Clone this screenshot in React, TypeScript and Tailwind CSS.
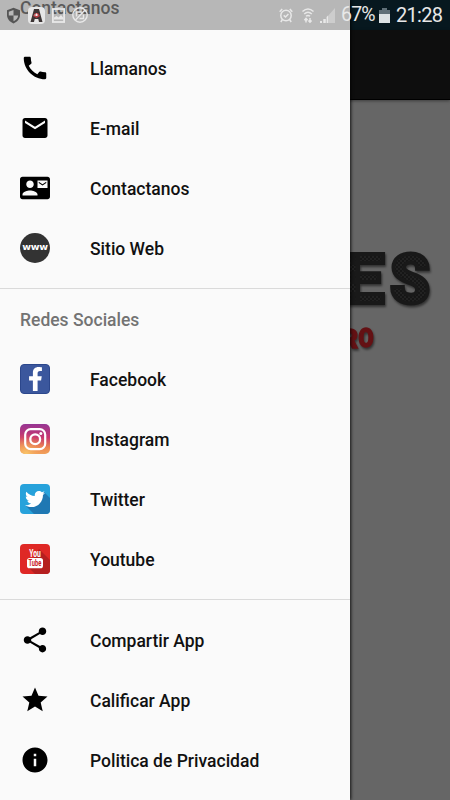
import type { ReactNode } from "react";
import { FaFacebookF, FaTwitter } from "react-icons/fa";
import { MdCall, MdContactMail, MdEmail, MdInfo, MdShare, MdStar } from "react-icons/md";

interface DrawerItem {
  label: string;
  icon: ReactNode;
}

function WebIcon() {
  return (
    <div className="flex h-[30px] w-[30px] items-center justify-center rounded-full bg-[#333]">
      <span className="-mt-[2px] font-['DejaVu_Sans',sans-serif] text-[9.5px] font-bold leading-none tracking-[-0.3px] text-white">
        www
      </span>
    </div>
  );
}

function FacebookIcon() {
  return (
    <div className="flex h-[30px] w-[30px] items-end justify-center overflow-hidden rounded-[4px] border border-[#2c478c] bg-[#3b579d]">
      <FaFacebookF className="mb-[2px] h-[24px] w-[15px] text-white" preserveAspectRatio="none" />
    </div>
  );
}

function InstagramIcon() {
  return (
    <svg width="30" height="30" viewBox="0 0 30 30" fill="none">
      <defs>
        <linearGradient id="ig-base" x1="0" y1="0" x2="0" y2="1">
          <stop offset="0" stopColor="#963694" />
          <stop offset="0.45" stopColor="#c8376f" />
          <stop offset="0.8" stopColor="#ed8a50" />
          <stop offset="1" stopColor="#f0a45c" />
        </linearGradient>
        <radialGradient id="ig-glow" cx="0.2" cy="1" r="0.7">
          <stop offset="0" stopColor="#f9c768" />
          <stop offset="1" stopColor="#f08050" stopOpacity="0" />
        </radialGradient>
      </defs>
      <rect width="30" height="30" rx="5" fill="url(#ig-base)" />
      <rect width="30" height="30" rx="5" fill="url(#ig-glow)" />
      <rect x="5.2" y="5.2" width="20" height="20" rx="5.5" stroke="white" strokeWidth="2.2" />
      <circle cx="15.2" cy="15.2" r="4.9" stroke="white" strokeWidth="2.3" />
      <circle cx="20.8" cy="9.4" r="1.5" fill="white" />
    </svg>
  );
}

function TwitterIcon() {
  return (
    <div className="relative h-[30px] w-[30px] overflow-hidden rounded-[4px] bg-[#27a2db]">
      <svg className="absolute inset-0" width="30" height="30" viewBox="0 0 30 30">
        <path d="M24 8 L30 14 V30 H14 L6 22 L15 20Z" fill="#1f78b3" />
      </svg>
      <FaTwitter className="absolute left-[5px] top-[5px] h-[20px] w-[20px] text-white" />
    </div>
  );
}

function YoutubeIcon() {
  return (
    <div className="relative h-[30px] w-[30px] overflow-hidden rounded-[4px] bg-[#df2825]">
      <svg className="absolute inset-0" width="30" height="30" viewBox="0 0 30 30">
        <path d="M19 5 L30 16 V30 H15 L8 23Z" fill="#b51f20" />
        <rect x="7" y="14" width="16" height="10.3" rx="2.6" fill="white" />
        <g fontFamily="Roboto, sans-serif" fontWeight="700" textAnchor="middle">
          <text x="15" y="12.8" fontSize="10.5" fill="white" textLength="11.5" lengthAdjust="spacingAndGlyphs">
            You
          </text>
          <text x="15" y="22.4" fontSize="8.8" fill="#c9201f" textLength="13" lengthAdjust="spacingAndGlyphs">
            Tube
          </text>
        </g>
      </svg>
    </div>
  );
}

const contactItems: DrawerItem[] = [
  { label: "Llamanos", icon: <MdCall size={30} /> },
  { label: "E-mail", icon: <MdEmail size={30} /> },
  { label: "Contactanos", icon: <MdContactMail size={30} /> },
  { label: "Sitio Web", icon: <WebIcon /> },
];

const socialItems: DrawerItem[] = [
  { label: "Facebook", icon: <FacebookIcon /> },
  { label: "Instagram", icon: <InstagramIcon /> },
  { label: "Twitter", icon: <TwitterIcon /> },
  { label: "Youtube", icon: <YoutubeIcon /> },
];

const appItems: DrawerItem[] = [
  { label: "Compartir App", icon: <MdShare size={30} /> },
  { label: "Calificar App", icon: <MdStar size={30} /> },
  { label: "Politica de Privacidad", icon: <MdInfo size={30} /> },
];

function DrawerSection({ items }: { items: DrawerItem[] }) {
  return (
    <ul>
      {items.map((item) => (
        <li key={item.label} className="flex h-[60px] items-center gap-10 px-5">
          <span className="flex h-[30px] w-[30px] shrink-0 items-center justify-center text-black">
            {item.icon}
          </span>
          <span className="whitespace-nowrap pt-px text-[17.5px] font-medium leading-6 text-[#111]">{item.label}</span>
        </li>
      ))}
    </ul>
  );
}

function StatusBar() {
  return (
    <div className="absolute inset-x-0 top-0 flex h-[30px] items-center justify-between pl-[6px] pr-[8px] text-[#e8e8e8]">
      <div className="absolute inset-y-0 left-0 -z-10 w-[350px] bg-[#666]/45" />
      <div className="flex items-center gap-[7px]">
        <svg width="15" height="17" viewBox="0 0 15 17">
          <path d="M7.5 .8 L14 3.2 V8 C14 12 11 15 7.5 16.4 C4 15 1 12 1 8 V3.2Z" fill="#555" />
          <path d="M7.5 3 V8.5 H12.2 C11.9 11.3 10 13.2 7.5 14.3 V8.5 H2.8 V4.7Z" fill="#b8b8b8" />
        </svg>
        <div className="flex h-[17px] w-[17px] items-center justify-center rounded-[4px] bg-[#e6e6e6]">
          <svg width="13" height="15" viewBox="0 0 13 15">
            <path d="M4 1 H9 L12.5 14 H9 L8.3 11 H4.7 L4 14 H.5Z" fill="#3c3434" />
            <path d="M5 5 H8 L10 8 L6.5 10 L3 8Z" fill="#b53c42" />
            <path d="M6.5 5.5 V8 M4.5 7 H8" stroke="#eee" />
          </svg>
        </div>
        <svg width="13" height="15" viewBox="0 0 13 15" fill="none" stroke="currentColor" strokeWidth="1.8">
          <rect x=".9" y="1" width="11.2" height="13" />
          <path d="M2 11.5 V9.5 L4.5 8 L6.5 9.5 L9 7 L11.5 10 V11.5Z" fill="currentColor" stroke="none" />
        </svg>
        <svg width="16" height="16" viewBox="0 0 16 16" fill="none" stroke="currentColor" strokeWidth="1.4">
          <circle cx="8" cy="8" r="7.2" />
          <path d="M3.5 13 L13 3 M4.5 9.5 V5 H9.5 M7.5 11.5 H11.5 V7.5" />
        </svg>
      </div>
      <div className="flex items-center">
        <svg width="14" height="15" viewBox="0 0 14 15" fill="none" stroke="currentColor" strokeWidth="1.5">
          <circle cx="7" cy="7.5" r="5.2" />
          <path d="M4.7 7.4 L6.5 9 L9.4 6 M.7 3.7 L3.2 1 M13.3 3.7 L10.8 1 M3.4 11.5 L1.8 14 M10.6 11.5 L12.2 14" />
        </svg>
        <svg className="ml-[8px]" width="14" height="15" viewBox="0 0 14 15" fill="none" stroke="currentColor" strokeWidth="1.5">
          <path d="M1.5 3.5 Q7 -1.5 12.5 3.5 M3.2 6 Q7 2.5 10.8 6 M5 8.3 Q7 6.6 9 8.3" />
          <path d="M5 14.5 V11 M3.4 12.3 L5 10.5 L6.6 12.3 M9 10 V14 M7.4 12.4 L9 14.2 L10.6 12.4" />
        </svg>
        <svg className="ml-[5px]" width="16" height="15" viewBox="0 0 16 15" fill="currentColor">
          <path d="M0 13 H2 V15 H0Z M3.3 11 H5.8 V15 H3.3Z" />
          <path d="M8 8 L15 0 V15 H8Z" opacity=".45" />
          <path d="M6.6 9 L8 7.5 V15 H6.6Z" />
        </svg>
        <span className="ml-[5px] w-[35px] whitespace-nowrap text-[19.5px] leading-[30px] tracking-[-0.8px]">67%</span>
        <svg className="ml-[3px]" width="11" height="15" viewBox="0 0 11 15">
          <path d="M3 0 H8 V2 H11 V6 H0 V2 H3Z" fill="#607078" />
          <path d="M0 6 H11 V15 H0Z" fill="#dce2e4" />
        </svg>
        <span className="ml-[6px] w-[46px] whitespace-nowrap text-[20px] leading-[30px] tracking-[-0.7px]">21:28</span>
      </div>
    </div>
  );
}

function HomeScreen() {
  return (
    <div className="flex h-full flex-col bg-[#666]">
      <div className="h-[30px] shrink-0 bg-[#07181f]" />
      <div className="h-[70px] shrink-0 border-b border-black bg-[#0e0e0e] shadow-[0_1px_3px_rgba(0,0,0,0.4)]" />
      <div className="flex flex-col items-end pt-[142px]">
        <svg className="drop-shadow-[1px_2px_1px_rgba(0,0,0,0.5)]" width="110" height="120" viewBox="0 0 110 120">
          <defs>
            <pattern id="mesh" width="4" height="4" patternUnits="userSpaceOnUse">
              <rect width="4" height="4" fill="#222" />
              <circle cx="1" cy="1" r="1" fill="#111" />
              <circle cx="3" cy="3" r="1" fill="#111" />
            </pattern>
          </defs>
          <g fontFamily="Roboto, sans-serif" fontWeight="900">
            <g fill="url(#mesh)" stroke="#191919" strokeWidth="4" fontSize="69">
              <text x="0" y="61" textLength="44" lengthAdjust="spacingAndGlyphs">E</text>
              <text x="50" y="61" textLength="40" lengthAdjust="spacingAndGlyphs">S</text>
            </g>
            <g fill="#641114" stroke="#641114" strokeWidth="1.5" fontSize="25">
              <text x="1" y="106" textLength="17" lengthAdjust="spacingAndGlyphs">R</text>
              <text x="18.5" y="104.5" textLength="15" lengthAdjust="spacingAndGlyphs">O</text>
            </g>
          </g>
        </svg>
      </div>
    </div>
  );
}

export default function App() {
  return (
    <div className="relative isolate h-[800px] w-[450px] overflow-hidden font-[Roboto,sans-serif]">
      <HomeScreen />
      <nav className="absolute inset-y-0 left-0 w-[350px] overflow-hidden bg-[#fafafa] shadow-[1px_0_3px_rgba(0,0,0,0.8)]">
        <h2 className="-mt-[4px] h-[42px] px-5 text-[17.5px] font-medium leading-6 text-[#505050]">Contactanos</h2>
        <DrawerSection items={contactItems} />
        <div className="mt-[10px] border-t border-[#dadada] pt-[19px]">
          <h2 className="h-[41px] px-5 text-[17.5px] font-medium leading-6 text-[#737373]">Redes Sociales</h2>
          <DrawerSection items={socialItems} />
        </div>
        <div className="mt-[10px] border-t border-[#dadada] pt-[10px]">
          <DrawerSection items={appItems} />
        </div>
      </nav>
      <div className="absolute inset-x-0 top-0 isolate h-[30px]">
        <StatusBar />
      </div>
    </div>
  );
}
